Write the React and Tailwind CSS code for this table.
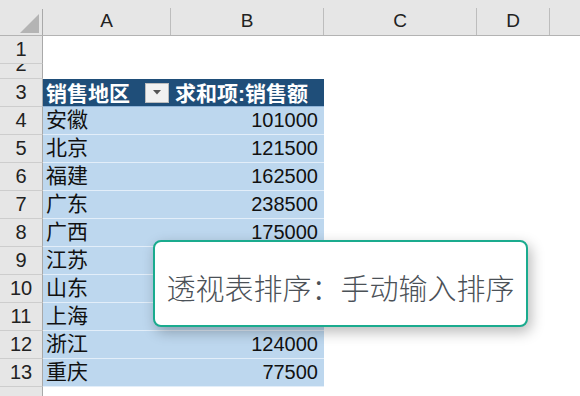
import React from "react";

const data = [
  ["安徽", "101000"],
  ["北京", "121500"],
  ["福建", "162500"],
  ["广东", "238500"],
  ["广西", "175000"],
  ["江苏", ""],
  ["山东", ""],
  ["上海", ""],
  ["浙江", "124000"],
  ["重庆", "77500"],
];

function ColHead({ w, label }) {
  return (
    <div className={`flex h-full ${w}`}>
      <div className="flex-1 flex items-end justify-center pb-[3px] text-[19px] leading-[22px] text-[#222]">{label}</div>
      <div className="w-px h-[27px] self-end bg-[#bdbdbd]" />
    </div>
  );
}

function RowHead({ n, h }) {
  return (
    <div className={`w-[43px] shrink-0 ${h} bg-[#e6e6e6] border-r border-r-[#a9a9a9] border-b border-b-[#cdcdcd] flex items-end justify-center overflow-hidden pb-[3px] text-[20px] leading-[22px] text-[#222]`}>
      <span>{n}</span>
    </div>
  );
}

export default function App() {
  return (
    <div className="relative w-[580px] h-[396px] overflow-hidden bg-white font-['Liberation_Sans','Noto_Sans_CJK_SC',sans-serif]">
      <div className="flex h-[36px] bg-[#e6e6e6] border-b border-[#b3b3b3]">
        <div className="w-[43px] shrink-0 h-full">
          <svg width="43" height="35" viewBox="0 0 43 35">
            <polygon points="39,14 39,33 20,33" fill="#b4b4b4" />
            <line x1="42.5" y1="9" x2="42.5" y2="35" stroke="#a9a9a9" strokeWidth="1" />
          </svg>
        </div>
        <ColHead w="w-[128px]" label="A" />
        <ColHead w="w-[153px]" label="B" />
        <ColHead w="w-[153px]" label="C" />
        <ColHead w="w-[73px]" label="D" />
        <div className="flex-1" />
      </div>

      <div className="flex">
        <RowHead n="1" h="h-[28px]" />
        <div className="flex-1" />
      </div>
      <div className="flex">
        <RowHead n="2" h="h-[15px]" />
        <div className="flex-1" />
      </div>
      <div className="flex">
        <RowHead n="3" h="h-[28px]" />
        <div className="w-[128px] h-[28px] bg-[#1f4e79] border-b border-b-[#8fb4d9] flex items-center pl-[3px] pr-[2px]">
          <span className="flex-1 text-white font-bold text-[21px] leading-[22px] pt-[2px]">销售地区</span>
          <div className="w-[24px] h-[20px] bg-[#f1f1f1] border border-[#bcbcbc] flex items-center justify-center">
            <svg width="8" height="5" viewBox="0 0 8 5">
              <polygon points="0,0 8,0 4,4.5" fill="#555" />
            </svg>
          </div>
        </div>
        <div className="w-[153px] h-[28px] bg-[#1f4e79] border-b border-b-[#8fb4d9] flex items-center pl-[4px]">
          <span className="text-white font-bold text-[21px] leading-[22px] pt-[2px]">求和项:销售额</span>
        </div>
        <div className="flex-1" />
      </div>
      {data.map(([name, val], i) => (
        <div className="flex" key={name}>
          <RowHead n={String(i + 4)} h="h-[28px]" />
          <div className="w-[128px] h-[28px] bg-[#bdd7ee] border-b border-b-[#e3eef9] flex items-end pl-[3px] pb-[3px] text-[21px] leading-[22px] text-[#111]">
            {name}
          </div>
          <div className="w-[153px] h-[28px] bg-[#bdd7ee] border-b border-b-[#e3eef9] flex items-end justify-end pr-[6px] pb-[3px] text-[20px] leading-[22px] text-[#111]">
            {val}
          </div>
          <div className="flex-1" />
        </div>
      ))}
      <div className="flex">
        <RowHead n="" h="h-[28px]" />
        <div className="flex-1" />
      </div>

      <div className="absolute left-[153px] top-[240px] w-[375px] h-[87px] rounded-[8px] border-2 border-[#1aab8e] bg-white shadow-[3px_5px_14px_rgba(0,0,0,0.28)] flex items-center justify-center pt-[6px]">
        <span className="font-['Noto_Sans_CJK_SC',sans-serif] font-light text-[29px] leading-[36px] text-[#4b5157] whitespace-nowrap">
          透视表排序：手动输入排序
        </span>
      </div>
    </div>
  );
}
